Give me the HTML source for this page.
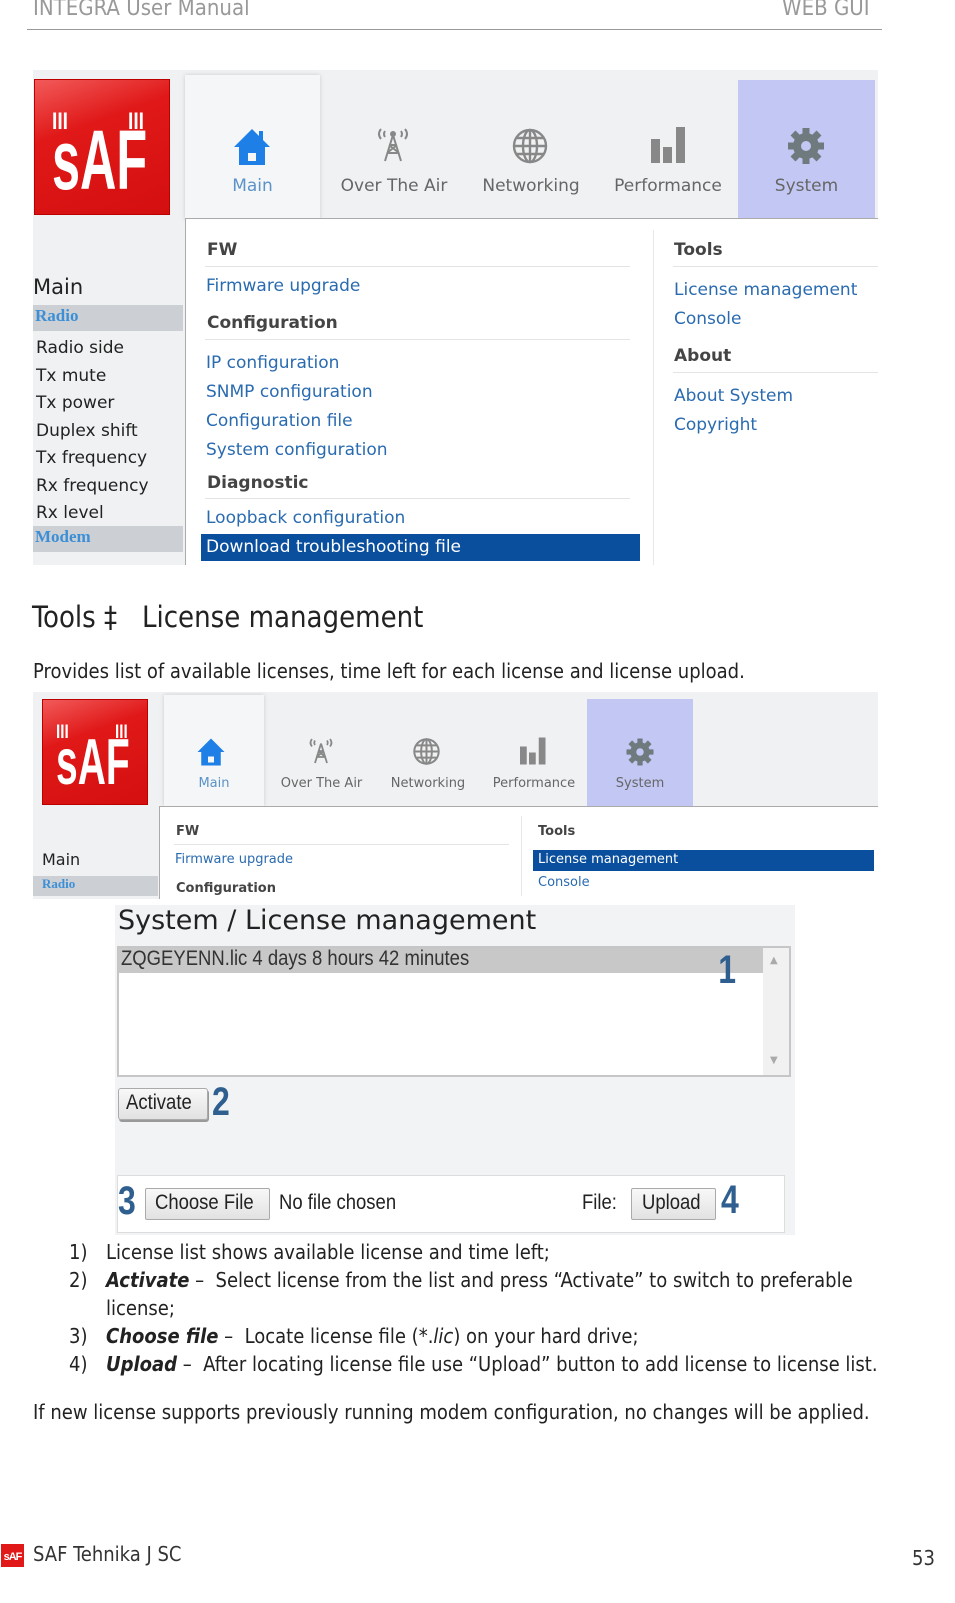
<!DOCTYPE html>
<html><head><meta charset="utf-8"><style>
*{margin:0;padding:0;box-sizing:border-box}
body{width:955px;height:1603px;background:#fff;font-family:"DejaVu Sans","Liberation Sans",sans-serif;position:relative;overflow:hidden;color:#222}
.a{position:absolute;white-space:nowrap}
.lib{font-family:"Liberation Sans",sans-serif}
.blue{color:#2a6bb0}
.logo{position:absolute;background:linear-gradient(160deg,#f25a5a 0%,#e01818 35%,#d40f0f 100%);border:1px solid #b00;overflow:hidden}
.logo .t{position:absolute;color:#fff;font-family:"Liberation Sans",sans-serif;font-weight:bold;transform-origin:left top}
.tab{position:absolute;text-align:center;color:#666}
.ml{color:#2a6bb0}
.hd{font-weight:bold;color:#444}
.ln{position:absolute;height:1px;background:#e4e4e4}
</style></head><body>
<!-- header -->
<div class="a" style="left:33px;top:-4px;font-size:22px;color:#999;font-family:'DejaVu Sans Condensed','DejaVu Sans',sans-serif">INTEGRA User Manual</div>
<div class="a" style="left:782px;top:-4px;font-size:22px;color:#999;font-family:'DejaVu Sans Condensed','DejaVu Sans',sans-serif">WEB GUI</div>
<div class="a" style="left:27px;top:29px;width:855px;height:1px;background:#999"></div>

<!-- Screenshot 1 -->
<div class="a" style="left:33px;top:70px;width:845px;height:495px;background:#eff1f3;overflow:hidden">
 <div class="logo" style="left:1px;top:9px;width:136px;height:136px">
  <div class="t" style="left:17px;top:38px;font-size:84px;line-height:84px;transform:scaleX(0.6)">sAF</div>
  <div class="t" style="left:17px;top:30px;font-size:24px;line-height:24px;transform:scaleX(0.8)">III</div>
  <div class="t" style="left:93px;top:30px;font-size:24px;line-height:24px;transform:scaleX(0.8)">III</div>
 </div>
 <div class="a" style="left:152px;top:5px;width:135px;height:145px;background:#f5f6f7;box-shadow:0 0 4px #ccc"></div>
 <div class="a" style="left:705px;top:10px;width:137px;height:138px;background:#c3c7f3"></div>
 <svg class="a" style="left:199px;top:57px" width="40" height="40" viewBox="0 0 40 40"><path d="M20 2 L38 20 L33 20 L33 38 L7 38 L7 20 L2 20 Z" fill="#1e7fe6"/><rect x="16" y="26" width="8" height="8" fill="#f5f6f7"/><rect x="27" y="4" width="4" height="10" fill="#1e7fe6"/></svg>
 <svg class="a" style="left:340px;top:55px" width="40" height="40" viewBox="0 0 40 40" fill="none" stroke="#888" stroke-width="2"><path d="M20 10 L12 36 M20 10 L28 36 M14 28 L26 28 M16 20 L24 20 M14 28 L24 20 M16 20 L26 28"/><path d="M8 4 Q4 9 8 14 M12 6 Q10 9 12 12 M32 4 Q36 9 32 14 M28 6 Q30 9 28 12"/><circle cx="20" cy="9" r="2" fill="#888"/></svg>
 <svg class="a" style="left:478px;top:57px" width="38" height="38" viewBox="0 0 38 38" fill="none" stroke="#888" stroke-width="2.4"><circle cx="19" cy="19" r="16"/><ellipse cx="19" cy="19" rx="7" ry="16"/><path d="M3 19 H35 M6 11 H32 M6 27 H32 M19 3 V35"/></svg>
 <svg class="a" style="left:617px;top:55px" width="38" height="40" viewBox="0 0 38 40" fill="#888"><rect x="1" y="14" width="9" height="24"/><rect x="13" y="22" width="9" height="16"/><rect x="26" y="2" width="9" height="36"/></svg>
 <svg class="a" style="left:753px;top:56px" width="40" height="40" viewBox="0 0 40 40"><g fill="#6f7a7f"><circle cx="20" cy="20" r="13"/><g stroke="#6f7a7f" stroke-width="7"><path d="M20 2 V38 M2 20 H38 M7 7 L33 33 M33 7 L7 33"/></g></g><circle cx="20" cy="20" r="5" fill="#c3c7f3"/></svg>
 <div class="tab" style="left:152px;top:106px;width:135px;font-size:17px;color:#5b93c8">Main</div>
 <div class="tab" style="left:293px;top:106px;width:136px;font-size:17px">Over The Air</div>
 <div class="tab" style="left:430px;top:106px;width:136px;font-size:17px">Networking</div>
 <div class="tab" style="left:567px;top:106px;width:136px;font-size:17px">Performance</div>
 <div class="tab" style="left:705px;top:106px;width:137px;font-size:17px">System</div>
 <div class="a" style="left:0;top:205px;font-size:21px">Main</div>
 <div class="a" style="left:0;top:235px;width:150px;height:26px;background:#ccd0d4"></div>
 <div class="a lib" style="left:2px;top:236px;font-size:17px;color:#3c8fd6;font-weight:bold;font-family:'Liberation Serif',serif">Radio</div>
 <div class="a" style="left:3px;top:265px;font-size:17px;line-height:27.5px;white-space:pre">Radio side
Tx mute
Tx power
Duplex shift
Tx frequency
Rx frequency
Rx level</div>
 <div class="a" style="left:0;top:456px;width:150px;height:26px;background:#ccd0d4"></div>
 <div class="a" style="left:2px;top:457px;font-size:17px;color:#3c8fd6;font-weight:bold;font-family:'Liberation Serif',serif">Modem</div>
 <div class="a" style="left:152px;top:148px;width:700px;height:360px;background:#fff;border:1px solid #aaa"></div>
 <div class="a hd" style="left:174px;top:170px;font-size:17px">FW</div>
 <div class="ln" style="left:172px;top:196px;width:425px"></div>
 <div class="a ml" style="left:173px;top:206px;font-size:17px">Firmware upgrade</div>
 <div class="a hd" style="left:174px;top:243px;font-size:17px">Configuration</div>
 <div class="ln" style="left:172px;top:269px;width:425px"></div>
 <div class="a ml" style="left:173px;top:279px;font-size:17px;line-height:29px;white-space:pre">IP configuration
SNMP configuration
Configuration file
System configuration</div>
 <div class="a hd" style="left:174px;top:403px;font-size:17px">Diagnostic</div>
 <div class="ln" style="left:172px;top:428px;width:425px"></div>
 <div class="a ml" style="left:173px;top:438px;font-size:17px">Loopback configuration</div>
 <div class="a" style="left:168px;top:464px;width:439px;height:27px;background:#0a4f9e"></div>
 <div class="a" style="left:173px;top:467px;font-size:17px;color:#fff">Download troubleshooting file</div>
 <div class="a" style="left:620px;top:160px;width:1px;height:340px;background:#e8e8e8"></div>
 <div class="a hd" style="left:641px;top:170px;font-size:17px">Tools</div>
 <div class="ln" style="left:640px;top:196px;width:210px"></div>
 <div class="a ml" style="left:641px;top:206px;font-size:17px;line-height:29px;white-space:pre">License management
Console</div>
 <div class="a hd" style="left:641px;top:276px;font-size:17px">About</div>
 <div class="ln" style="left:640px;top:302px;width:210px"></div>
 <div class="a ml" style="left:641px;top:312px;font-size:17px;line-height:29px;white-space:pre">About System
Copyright</div>
</div>

<div class="a" style="left:32px;top:600px;font-size:29px;font-family:'DejaVu Sans Condensed','DejaVu Sans',sans-serif;color:#222">Tools ‡&nbsp;&nbsp; License management</div>
<div class="a" style="left:33px;top:659px;font-size:20px;font-family:'DejaVu Sans Condensed','DejaVu Sans',sans-serif">Provides list of available licenses, time left for each license and license upload.</div>

<!-- Screenshot 2 -->
<div class="a" style="left:33px;top:692px;width:845px;height:207px;background:#eff1f3;overflow:hidden">
 <div class="logo" style="left:9px;top:7px;width:106px;height:106px">
  <div class="t" style="left:13px;top:29px;font-size:65px;line-height:65px;transform:scaleX(0.6)">sAF</div>
  <div class="t" style="left:13px;top:23px;font-size:19px;line-height:19px;transform:scaleX(0.8)">III</div>
  <div class="t" style="left:72px;top:23px;font-size:19px;line-height:19px;transform:scaleX(0.8)">III</div>
 </div>
 <div class="a" style="left:131px;top:3px;width:100px;height:111px;background:#f5f6f7;box-shadow:0 0 4px #ccc"></div>
 <div class="a" style="left:554px;top:7px;width:106px;height:107px;background:#c3c7f3"></div>
 <svg class="a" style="left:163px;top:45px" width="30" height="30" viewBox="0 0 40 40"><path d="M20 2 L38 20 L33 20 L33 38 L7 38 L7 20 L2 20 Z" fill="#1e7fe6"/><rect x="16" y="26" width="8" height="8" fill="#f5f6f7"/></svg>
 <svg class="a" style="left:273px;top:44px" width="30" height="30" viewBox="0 0 40 40" fill="none" stroke="#888" stroke-width="2.4"><path d="M20 10 L12 36 M20 10 L28 36 M14 28 L26 28 M16 20 L24 20 M14 28 L24 20 M16 20 L26 28"/><path d="M8 4 Q4 9 8 14 M12 6 Q10 9 12 12 M32 4 Q36 9 32 14 M28 6 Q30 9 28 12"/></svg>
 <svg class="a" style="left:379px;top:45px" width="29" height="29" viewBox="0 0 38 38" fill="none" stroke="#888" stroke-width="2.6"><circle cx="19" cy="19" r="16"/><ellipse cx="19" cy="19" rx="7" ry="16"/><path d="M3 19 H35 M6 11 H32 M6 27 H32 M19 3 V35"/></svg>
 <svg class="a" style="left:486px;top:44px" width="29" height="30" viewBox="0 0 38 40" fill="#888"><rect x="1" y="14" width="9" height="24"/><rect x="13" y="22" width="9" height="16"/><rect x="26" y="2" width="9" height="36"/></svg>
 <svg class="a" style="left:592px;top:45px" width="30" height="30" viewBox="0 0 40 40"><g fill="#6f7a7f"><circle cx="20" cy="20" r="13"/><g stroke="#6f7a7f" stroke-width="7"><path d="M20 2 V38 M2 20 H38 M7 7 L33 33 M33 7 L7 33"/></g></g><circle cx="20" cy="20" r="5" fill="#c3c7f3"/></svg>
 <div class="tab" style="left:131px;top:84px;width:100px;font-size:13px;color:#5b93c8">Main</div>
 <div class="tab" style="left:235px;top:84px;width:107px;font-size:13px">Over The Air</div>
 <div class="tab" style="left:342px;top:84px;width:106px;font-size:13px">Networking</div>
 <div class="tab" style="left:448px;top:84px;width:106px;font-size:13px">Performance</div>
 <div class="tab" style="left:554px;top:84px;width:106px;font-size:13px">System</div>
 <div class="a" style="left:126px;top:114px;width:730px;height:100px;background:#fff;border:1px solid #aaa"></div>
 <div class="a" style="left:9px;top:158px;font-size:16px">Main</div>
 <div class="a" style="left:0;top:184px;width:125px;height:20px;background:#ccd0d4"></div>
 <div class="a" style="left:9px;top:184px;font-size:13px;color:#3c8fd6;font-weight:bold;font-family:'Liberation Serif',serif">Radio</div>
 <div class="a hd" style="left:143px;top:132px;font-size:13px">FW</div>
 <div class="ln" style="left:141px;top:152px;width:335px"></div>
 <div class="a ml" style="left:142px;top:160px;font-size:13px">Firmware upgrade</div>
 <div class="a hd" style="left:143px;top:189px;font-size:13px">Configuration</div>
 <div class="a" style="left:488px;top:124px;width:1px;height:80px;background:#e8e8e8"></div>
 <div class="a hd" style="left:505px;top:132px;font-size:13px">Tools</div>
 <div class="a" style="left:500px;top:158px;width:341px;height:21px;background:#0a4f9e"></div>
 <div class="a" style="left:505px;top:160px;font-size:13px;color:#fff">License management</div>
 <div class="a ml" style="left:505px;top:183px;font-size:13px">Console</div>
</div>

<!-- License panel -->
<div class="a" style="left:115px;top:905px;width:680px;height:330px;background:#f2f3f5">
 <div class="a" style="left:3px;top:0px;font-size:27px;color:#222">System / License management</div>
 <div class="a" style="left:2px;top:41px;width:674px;height:131px;background:#fff;border:2px solid #c6c6c6"></div>
 <div class="a" style="left:4px;top:43px;width:644px;height:25px;background:#c8c8c8"></div>
 <div class="a" style="left:648px;top:43px;width:26px;height:127px;background:#f1f1f1"></div>
 <div class="a" style="left:655px;top:50px;font-size:10px;color:#aaa">▲</div>
 <div class="a" style="left:655px;top:150px;font-size:10px;color:#aaa">▼</div>
 <div class="a lib" style="left:6px;top:42px;font-size:21px;color:#333;transform:scaleX(0.88);transform-origin:left">ZQGEYENN.lic 4 days 8 hours 42 minutes</div>
 <div class="a lib" style="left:601px;top:43px;font-size:40px;font-weight:bold;color:#2f5f8f;transform:scaleX(0.8)">1</div>
 <div class="a" style="left:3px;top:183px;width:90px;height:32px;background:linear-gradient(#f8f8f8,#e2e2e2);border:1px solid #aaa;border-radius:3px;box-shadow:1px 2px 0 #999"></div>
 <div class="a lib" style="left:11px;top:186px;font-size:21px;color:#222;transform:scaleX(0.88);transform-origin:left">Activate</div>
 <div class="a lib" style="left:97px;top:175px;font-size:40px;font-weight:bold;color:#2f5f8f;transform:scaleX(0.8);transform-origin:left">2</div>
 <div class="a" style="left:2px;top:270px;width:668px;height:58px;background:#fff;border:1px solid #ddd"></div>
 <div class="a lib" style="left:3px;top:274px;font-size:40px;font-weight:bold;color:#2f5f8f;transform:scaleX(0.8);transform-origin:left">3</div>
 <div class="a" style="left:30px;top:283px;width:125px;height:32px;background:linear-gradient(#f8f8f8,#e2e2e2);border:1px solid #aaa;border-radius:2px"></div>
 <div class="a lib" style="left:40px;top:286px;font-size:21px;color:#222;transform:scaleX(0.88);transform-origin:left">Choose File</div>
 <div class="a lib" style="left:164px;top:286px;font-size:21px;color:#222;transform:scaleX(0.88);transform-origin:left">No file chosen</div>
 <div class="a lib" style="left:467px;top:286px;font-size:21px;color:#222;transform:scaleX(0.88);transform-origin:left">File:</div>
 <div class="a" style="left:516px;top:283px;width:85px;height:32px;background:linear-gradient(#f8f8f8,#e2e2e2);border:1px solid #aaa;border-radius:2px"></div>
 <div class="a lib" style="left:527px;top:286px;font-size:21px;color:#222;transform:scaleX(0.88);transform-origin:left">Upload</div>
 <div class="a lib" style="left:606px;top:273px;font-size:40px;font-weight:bold;color:#2f5f8f;transform:scaleX(0.8);transform-origin:left">4</div>
</div>

<!-- list -->
<div style="font-family:'DejaVu Sans Condensed','DejaVu Sans',sans-serif;font-size:20px;color:#222">
<div class="a" style="left:69px;top:1240px">1)</div><div class="a" style="left:106px;top:1240px">License list shows available license and time left;</div>
<div class="a" style="left:69px;top:1268px">2)</div><div class="a" style="left:106px;top:1268px"><b><i>Activate</i></b> –&nbsp; Select license from the list and press “Activate” to switch to preferable</div>
<div class="a" style="left:106px;top:1296px">license;</div>
<div class="a" style="left:69px;top:1324px">3)</div><div class="a" style="left:106px;top:1324px"><b><i>Choose file</i></b> –&nbsp; Locate license file (*.<i>lic</i>) on your hard drive;</div>
<div class="a" style="left:69px;top:1352px">4)</div><div class="a" style="left:106px;top:1352px"><b><i>Upload</i></b> –&nbsp; After locating license file use “Upload” button to add license to license list.</div>
<div class="a" style="left:33px;top:1400px">If new license supports previously running modem configuration, no changes will be applied.</div>
</div>

<!-- footer -->
<div class="a" style="left:1px;top:1544px;width:23px;height:23px;background:#e01818;color:#fff;font:bold 11px 'Liberation Sans',sans-serif;text-align:center;line-height:26px;letter-spacing:-1px">sAF</div>
<div class="a" style="left:33px;top:1542px;font-size:20px;font-family:'DejaVu Sans Condensed','DejaVu Sans',sans-serif;color:#333">SAF Tehnika J SC</div>
<div class="a" style="left:912px;top:1546px;font-size:20px;font-family:'DejaVu Sans Condensed','DejaVu Sans',sans-serif;color:#333">53</div>
</body></html>
